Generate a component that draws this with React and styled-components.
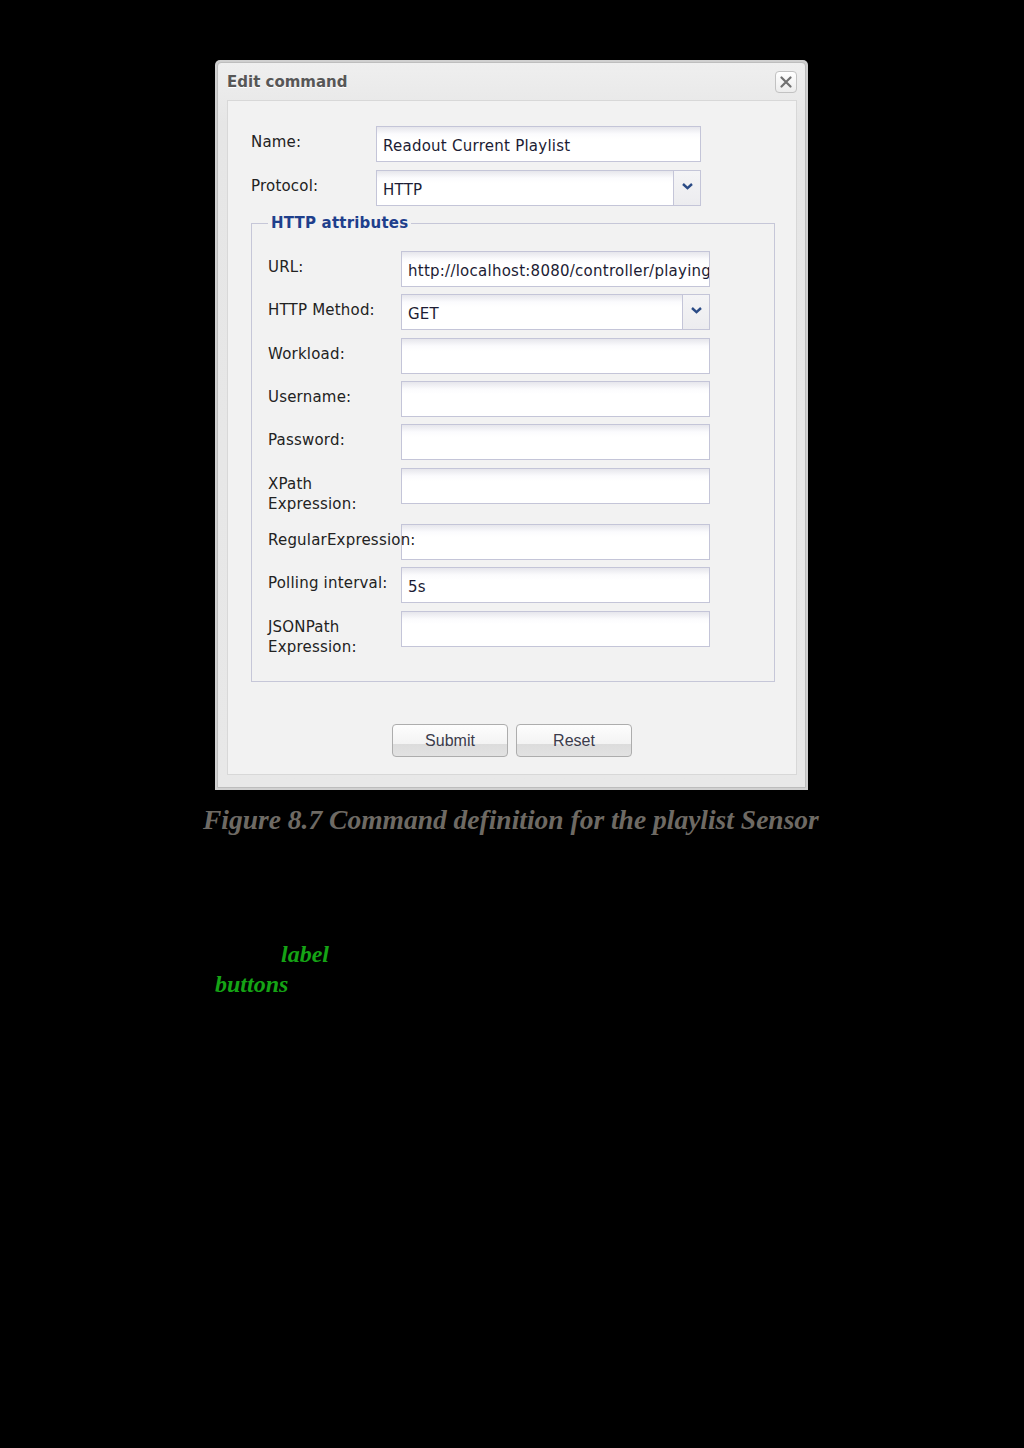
import styled, { createGlobalStyle } from "styled-components";

const Global = createGlobalStyle`
html, body {
    margin: 0;
    background: #000;
}
`

const Page = styled.div`
min-height: 1448px;
padding-top: 60px;
box-sizing: border-box;
display: flex;
flex-direction: column;
align-items: flex-start;
`

const Frame = styled.div`
margin-left: 215px;
width: 593px;
height: 730px;
box-sizing: border-box;
padding: 2px;
background: #d0d0d0;
border-radius: 5px 5px 0 0;
`

const Window = styled.div`
height: 100%;
box-sizing: border-box;
border: 1px solid #bdbdbd;
border-radius: 4px 4px 0 0;
background: linear-gradient(#efefef, #e6e6e6 60px, #e8e8e8);
display: flex;
flex-direction: column;
`

const TitleBar = styled.div`
height: 37px;
padding: 0 8px 0 9px;
display: flex;
align-items: center;
justify-content: space-between;
h1{
    margin: 0;
    font-family: "DejaVu Sans", sans-serif;
    font-size: 15px;
    font-weight: bold;
    color: #575757;
    text-shadow: 0 1px 0 #fff;
}
`

const CloseButton = styled.div`
width: 22px;
height: 22px;
box-sizing: border-box;
border: 1px solid #c2c2c2;
border-radius: 4px;
background: linear-gradient(#ffffff, #ececec);
display: flex;
align-items: center;
justify-content: center;
`

const Body = styled.div`
margin: 0 8px 0 9px;
height: 675px;
box-sizing: border-box;
border: 1px solid #d8d8d8;
background: #f2f2f2;
display: flex;
flex-direction: column;
`

const Form = styled.div`
padding: 25px 0 0 23px;
display: flex;
flex-direction: column;
gap: 8px;
`

const Row = styled.div`
display: flex;
align-items: flex-start;
`

const Label = styled.div`
position: relative;
z-index: 1;
flex: 0 0 ${({w}) => w}px;
width: ${({w}) => w}px;
box-sizing: border-box;
padding: 6px 0 3px;
font-family: "DejaVu Sans", sans-serif;
font-size: 15px;
letter-spacing: 0.2px;
line-height: 20px;
color: #222;
white-space: ${({nowrap}) => nowrap ? "nowrap" : "normal"};
`

const Field = styled.div`
width: ${({w}) => w}px;
height: 36px;
box-sizing: border-box;
border: 1px solid #c4c5d8;
background: linear-gradient(#e6e6ec, #fbfbfd 7px, #fff 12px);
display: flex;
align-items: stretch;
overflow: hidden;
span{
    flex: 1;
    padding: 9px 3px 0 6px;
    font-family: "DejaVu Sans", sans-serif;
    font-size: 15px;
    letter-spacing: 0.25px;
    line-height: 20px;
    color: #1c1c34;
    white-space: nowrap;
    overflow: hidden;
}
`

const DropArrow = styled.div`
flex: 0 0 26px;
border-left: 1px solid #c4c5d8;
background: linear-gradient(#f4f4f6, #ececef);
display: flex;
align-items: center;
justify-content: center;
padding-bottom: 4px;
`

const Fieldset = styled.fieldset`
margin: 0;
width: 524px;
box-sizing: border-box;
border: 1px solid #c6c7d8;
padding: 19px 64px 21px 16px;
display: flex;
flex-direction: column;
gap: 7.33px;
legend{
    padding: 0 3px;
    font-family: "DejaVu Sans", sans-serif;
    font-size: 15px;
    font-weight: bold;
    letter-spacing: 0.2px;
    line-height: 18px;
    color: #1f3f8c;
}
`

const ButtonBar = styled.div`
margin-top: 42px;
display: flex;
justify-content: center;
gap: 8px;
`

const Button = styled.div`
width: 116px;
height: 33px;
box-sizing: border-box;
border: 1px solid #adadad;
border-radius: 4px;
background: linear-gradient(#fdfdfd, #f3f3f3 62%, #dcdcdc 62%, #e2e2e2);
font-family: "Liberation Sans", Arial, sans-serif;
font-size: 16px;
line-height: 31px;
text-align: center;
color: #3b3b4b;
`

const Caption = styled.div`
margin: 13px 0 0 203px;
font-family: "Liberation Serif", serif;
font-style: italic;
font-weight: bold;
font-size: 27.5px;
line-height: 33px;
color: #6e6a64;
white-space: nowrap;
`

const Notes = styled.div`
margin: 103px 0 0 215px;
font-family: "Liberation Serif", serif;
font-style: italic;
font-weight: bold;
font-size: 24px;
line-height: 30px;
color: #15a315;
p{
    margin: 0;
}
.indent{
    padding-left: 66px;
}
`

const Chevron = () => (
    <svg width="11" height="7" viewBox="0 0 11 7">
        <path d="M1 1 L5.5 5.2 L10 1" fill="none" stroke="#2b4b86" strokeWidth="2.4" />
    </svg>
)

const Input = ({ w, value, select }) => (
    <Field w={w}>
        <span>{value}</span>
        {select && <DropArrow><Chevron /></DropArrow>}
    </Field>
)

const httpRows = [
    { label: "URL:", value: "http://localhost:8080/controller/playing" },
    { label: "HTTP Method:", value: "GET", select: true },
    { label: "Workload:" },
    { label: "Username:" },
    { label: "Password:" },
    { label: "XPath Expression:" },
    { label: "RegularExpression:", nowrap: true },
    { label: "Polling interval:", value: "5s" },
    { label: "JSONPath Expression:" },
]

const App = () => {
    return(
        <Page>
        <Global />
        <Frame>
            <Window>
                <TitleBar>
                    <h1>Edit command</h1>
                    <CloseButton>
                        <svg width="12" height="12" viewBox="0 0 12 12">
                            <path d="M1.5 1.5 L10.5 10.5 M10.5 1.5 L1.5 10.5" stroke="#707070" strokeWidth="2.2" strokeLinecap="round" />
                        </svg>
                    </CloseButton>
                </TitleBar>
                <Body>
                    <Form>
                        <Row>
                            <Label w={125}>Name:</Label>
                            <Input w={325} value="Readout Current Playlist" />
                        </Row>
                        <Row>
                            <Label w={125}>Protocol:</Label>
                            <Input w={325} value="HTTP" select />
                        </Row>
                        <Fieldset>
                            <legend>HTTP attributes</legend>
                            {httpRows.map((r, i) => (
                                <Row key={i}>
                                    <Label w={133} nowrap={r.nowrap}>{r.label}</Label>
                                    <Input w={309} value={r.value} select={r.select} />
                                </Row>
                            ))}
                        </Fieldset>
                    </Form>
                    <ButtonBar>
                        <Button>Submit</Button>
                        <Button>Reset</Button>
                    </ButtonBar>
                </Body>
            </Window>
        </Frame>
        <Caption>Figure 8.7 Command definition for the playlist Sensor</Caption>
        <Notes>
            <p className="indent">label</p>
            <p>buttons</p>
        </Notes>
        </Page>
    )
}

export default App;
